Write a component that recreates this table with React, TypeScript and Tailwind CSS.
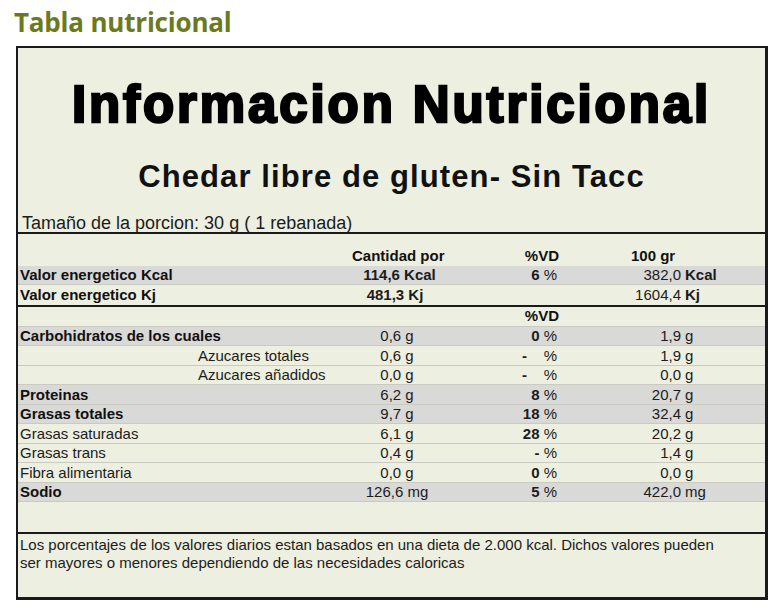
import React from "react";

type Row = {
  label: string;
  bold?: boolean;
  gray?: boolean;
  indent?: boolean;
  qty: string;
  vd: string;
  num: string;
  unit: string;
};

const rows: Row[] = [
  { label: "Carbohidratos de los cuales", bold: true, gray: true, qty: "0,6 g", vd: "0", num: "1,9", unit: "g" },
  { label: "Azucares totales", indent: true, qty: "0,6 g", vd: "-   ", num: "1,9", unit: "g" },
  { label: "Azucares añadidos", indent: true, qty: "0,0 g", vd: "-   ", num: "0,0", unit: "g" },
  { label: "Proteinas", bold: true, gray: true, qty: "6,2 g", vd: "8", num: "20,7", unit: "g" },
  { label: "Grasas totales", bold: true, gray: true, qty: "9,7 g", vd: "18", num: "32,4", unit: "g" },
  { label: "Grasas saturadas", qty: "6,1 g", vd: "28", num: "20,2", unit: "g" },
  { label: "Grasas trans", qty: "0,4 g", vd: "-", num: "1,4", unit: "g" },
  { label: "Fibra alimentaria", qty: "0,0 g", vd: "0", num: "0,0", unit: "g" },
  { label: "Sodio", bold: true, gray: true, qty: "126,6 mg", vd: "5", num: "422,0", unit: "mg" },
];

function Vd({ value }: { value: string }) {
  return (
    <div className="w-[115px] whitespace-pre text-right">
      <span className="font-bold">{value}</span> %
    </div>
  );
}

function NutrientRow({ row }: { row: Row }) {
  return (
    <div
      className={`flex h-[19.5px] items-center border-b border-[#c9cac2] leading-[19.5px] ${
        row.gray ? "bg-[#d9d9d7]" : ""
      }`}
    >
      <div className={`w-[334px] ${row.indent ? "pl-[180px]" : "pl-[2px]"} ${row.bold ? "font-bold text-[#111]" : ""}`}>
        {row.label}
      </div>
      <div className="w-[90px] text-center">{row.qty}</div>
      <Vd value={row.vd} />
      <div className="w-[124px] text-right">{row.num}</div>
      <div className="pl-[4px]">{row.unit}</div>
    </div>
  );
}

export default function App() {
  return (
    <div className="h-[610px] w-[784px] bg-white font-['Liberation_Sans',Arial,sans-serif] text-[#1c1c1c]">
      <h1 className="pl-[14px] pt-[4px] font-['Open_Sans',sans-serif] text-[26px] font-bold leading-[36px] tracking-[-0.2px] text-[#6b7a1f]">
        Tabla nutricional
      </h1>

      <div className="ml-[16px] mt-[6px] h-[554px] w-[752px] border-b-[3px] border-l-2 border-r-[3px] border-t-2 border-[#1a1a1a] bg-[#edefe0]">
        <div className="flex h-[184px] flex-col items-center">
          <div className="mt-[31px] text-[51px] font-bold leading-none tracking-[2.9px] text-black [-webkit-text-stroke:2.5px_black]">
            Informacion Nutricional
          </div>
          <div className="mt-[31px] text-[31px] font-bold leading-none tracking-[1.1px] text-[#111]">
            Chedar libre de gluten- Sin Tacc
          </div>
          <div className="mt-[22px] self-start pl-[4px] text-[18px] leading-none">
            Tamaño de la porcion: 30 g ( 1 rebanada)
          </div>
        </div>

        <div className="border-t-2 border-[#1a1a1a] text-[15px]">
          <div className="flex h-[31.5px] items-end whitespace-nowrap font-bold leading-[19.5px] text-[#111]">
            <div className="w-[334px]" />
            <div className="w-[90px] text-center">Cantidad por</div>
            <div className="w-[117px] text-right">%VD</div>
            <div className="pl-[72px]">100 gr</div>
          </div>
          <div className="flex h-[19.5px] items-center border-b border-[#c9cac2] bg-[#d9d9d7] leading-[19.5px]">
            <div className="w-[334px] pl-[2px] font-bold text-[#111]">Valor energetico Kcal</div>
            <div className="w-[90px] whitespace-nowrap pl-[5px] text-center font-bold">114,6 Kcal</div>
            <Vd value="6" />
            <div className="w-[124px] text-right">382,0</div>
            <div className="pl-[4px] font-bold">Kcal</div>
          </div>
          <div className="flex h-[19.5px] items-center leading-[19.5px]">
            <div className="w-[334px] pl-[2px] font-bold text-[#111]">Valor energetico Kj</div>
            <div className="w-[90px] pr-[4px] text-center font-bold">481,3 Kj</div>
            <div className="w-[115px]" />
            <div className="w-[124px] text-right">1604,4</div>
            <div className="pl-[4px] font-bold">Kj</div>
          </div>

          <div className="border-t-2 border-[#1a1a1a]">
            <div className="flex h-[20px] items-center border-b border-[#c9cac2] font-bold leading-[20px] text-[#111]">
              <div className="w-[334px]" />
              <div className="w-[90px]" />
              <div className="w-[117px] text-right">%VD</div>
            </div>
            {rows.map((row) => (
              <NutrientRow key={row.label} row={row} />
            ))}
            <div className="h-[29.5px]" />
          </div>

          <div className="h-[65px] border-t-2 border-[#1a1a1a] pl-[2px] pt-[2px] text-[15px] leading-[18.5px]">
            Los porcentajes de los valores diarios estan basados en una dieta de 2.000 kcal. Dichos valores pueden
            <br />
            ser mayores o menores dependiendo de las necesidades caloricas
          </div>
        </div>
      </div>
    </div>
  );
}
